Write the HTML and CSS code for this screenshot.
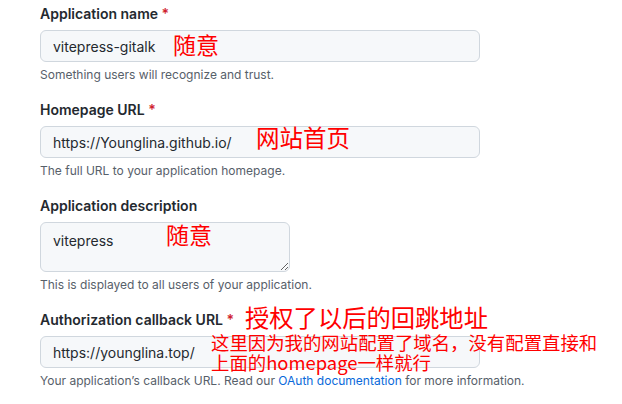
FILE: index.html
```html
<!DOCTYPE html>
<html lang="en">
<head>
<meta charset="utf-8">
<title>Register OAuth app</title>
<link rel="stylesheet" href="styles.css">
</head>
<body>
<div class="page">
  <form class="form">
    <div class="group">
      <label class="label">Application name <span class="req">*</span></label>
      <input class="input" type="text" value="vitepress-gitalk" readonly>
      <p class="note">Something users will recognize and trust.</p>
    </div>
    <div class="group">
      <label class="label">Homepage URL <span class="req">*</span></label>
      <input class="input" type="text" value="https://Younglina.github.io/" readonly>
      <p class="note">The full URL to your application homepage.</p>
    </div>
    <div class="group">
      <label class="label">Application description</label>
      <textarea class="textarea" readonly>vitepress</textarea>
      <p class="note">This is displayed to all users of your application.</p>
    </div>
    <div class="group">
      <label class="label">Authorization callback URL <span class="req">*</span></label>
      <input class="input" type="text" value="https://younglina.top/" readonly>
      <p class="note">Your application’s callback URL. Read our <a class="link" href="#">OAuth documentation</a> for more information.</p>
    </div>
  </form>
  <div class="anno anno-name">随意</div>
  <div class="anno anno-home">网站首页</div>
  <div class="anno anno-desc">随意</div>
  <div class="anno anno-cb">授权了以后的回跳地址</div>
  <div class="anno anno-cb2">这里因为我的网站配置了域名，没有配置直接和<br>上面的homepage一样就行</div>
</div>
</body>
</html>
```
FILE: styles.css
```css
* { box-sizing: border-box; }
html, body { margin: 0; background: #ffffff; }
body {
  font-family: Inter, "Liberation Sans", Arial, sans-serif;
  color: #24292f;
}
.page {
  position: relative;
  width: 622px;
  height: 404px;
  overflow: hidden;
}
.form {
  display: flex;
  flex-direction: column;
  gap: 16px;
  padding: 4px 40px 0 40px;
}
.group {
  display: flex;
  flex-direction: column;
  align-items: flex-start;
}
.label {
  font-size: 14px;
  font-weight: 600;
  line-height: 20px;
  margin-bottom: 6px;
  color: #24292f;
}
.req { color: #cf222e; }
.input, .textarea {
  font-family: Inter, "Liberation Sans", Arial, sans-serif;
  font-size: 14px;
  color: #24292f;
  background: #f6f8fa;
  border: 1px solid #d0d7de;
  border-radius: 6px;
  padding: 5px 12px;
  outline: none;
  margin: 0;
}
.input {
  width: 440px;
  height: 32px;
  line-height: 20px;
}
.textarea {
  width: 250px;
  height: 50px;
  line-height: 20px;
  padding-top: 8px;
  resize: vertical;
  overflow: hidden;
  display: block;
}
.note {
  margin: 4px 0 0 0;
  font-size: 12px;
  line-height: 18px;
  color: #57606a;
}
.link { color: #0969da; text-decoration: none; }
.anno {
  position: absolute;
  color: #ff0000;
  font-family: "Noto Sans CJK SC", sans-serif;
  line-height: 1;
  white-space: nowrap;
}
.anno-name { left: 173px; top: 33px; font-size: 23px; }
.anno-home { left: 256px; top: 126px; font-size: 23.5px; }
.anno-desc { left: 166px; top: 223px; font-size: 23px; }
.anno-cb { left: 245px; top: 305px; font-size: 24.3px; }
.anno-cb2 { left: 211px; top: 332px; font-size: 18.4px; line-height: 20px; }
```
